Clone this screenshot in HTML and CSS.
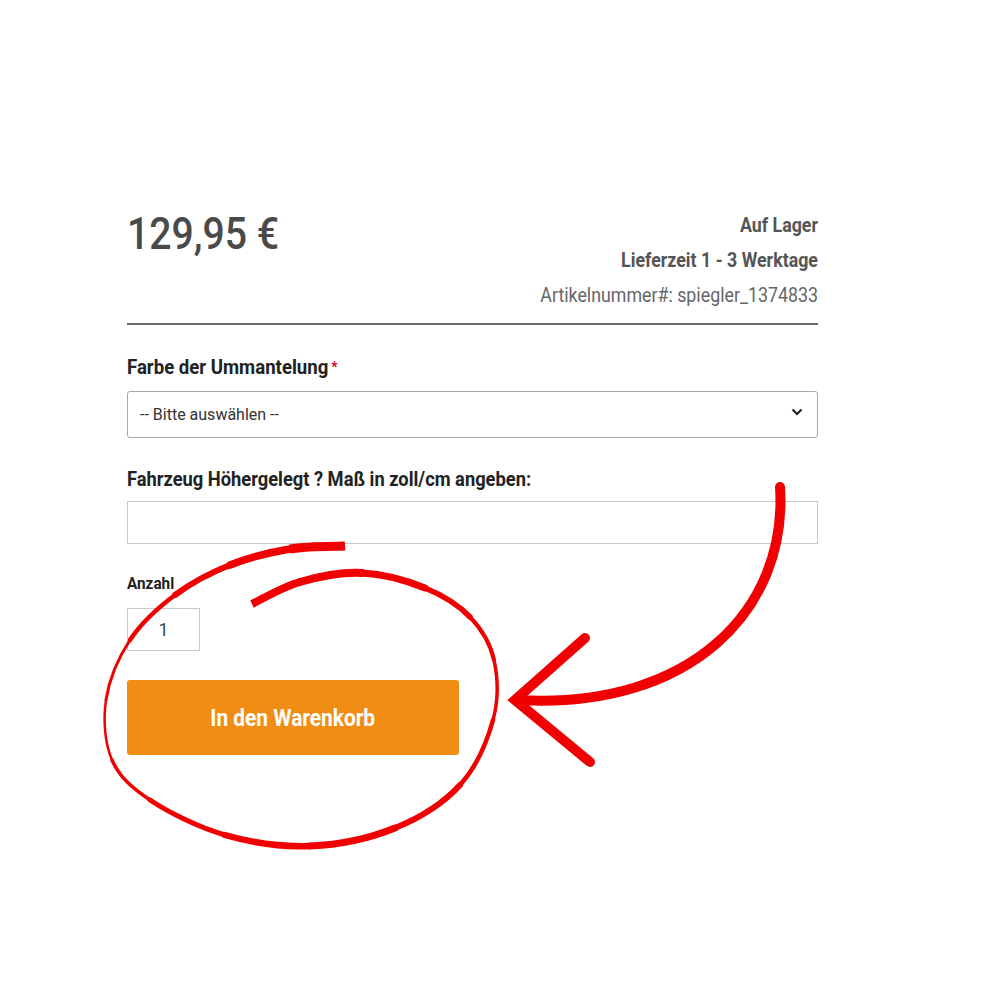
FILE: index.html
```html
<!DOCTYPE html>
<html lang="de">
<head>
<meta charset="utf-8">
<title>Produkt</title>
<link rel="stylesheet" href="styles.css">
</head>
<body>
<main class="product">
  <div class="head">
    <div class="price">129,95 €</div>
    <div class="meta">
      <div class="meta-strong">Auf Lager</div>
      <div class="meta-strong">Lieferzeit 1 - 3 Werktage</div>
      <div class="meta-light">Artikelnummer#: spiegler_1374833</div>
    </div>
  </div>
  <div class="rule"></div>

  <div class="field">
    <label class="label">Farbe der Ummantelung<span class="req">*</span></label>
    <div class="select">
      <span class="select-text">-- Bitte auswählen --</span>
      <svg class="chev" width="12" height="8" viewBox="0 0 12 8"><path d="M1.5 1.5 L6 6 L10.5 1.5" fill="none" stroke="#222" stroke-width="2.2"/></svg>
    </div>
  </div>

  <div class="field field-2">
    <label class="label label-2">Fahrzeug Höhergelegt ? Maß in zoll/cm angeben:</label>
    <div class="text-input"></div>
  </div>

  <div class="qty-field">
    <label class="qty-label">Anzahl</label>
    <div class="qty">1</div>
  </div>

  <button class="cart"><span class="cart-text">In den Warenkorb</span></button>
</main>

<svg class="marks" width="1000" height="1000" viewBox="0 0 1000 1000">
  <g fill="none" stroke="#f00000" stroke-linecap="round">
    <path d="M345,546 C335.8,546.5 309.2,545.8 290,549" stroke-width="9" stroke-linecap="butt"/>
    <path d="M290,549 C270.8,552.2 249.2,557.3 230,565" stroke-width="7.5"/>
    <path d="M230,565 C210.8,572.7 191.7,582.5 175,595" stroke-width="6"/>
    <path d="M175,595 C158.3,607.5 141.5,622.5 130,640" stroke-width="4.5"/>
    <path d="M130,640 C118.5,657.5 109,680 106,700" stroke-width="3"/>
    <path d="M106,700 C103,720 104.7,743.3 112,760" stroke-width="2.5"/>
    <path d="M112,760 C119.3,776.7 131.2,787.5 150,800" stroke-width="3.5"/>
    <path d="M150,800 C168.8,812.5 198.3,827.3 225,835" stroke-width="5"/>
    <path d="M225,835 C251.7,842.7 281.7,847.2 310,846" stroke-width="6.5"/>
    <path d="M310,846 C338.3,844.8 370,838.2 395,828" stroke-width="7"/>
    <path d="M395,828 C420,817.8 443.7,803 460,785" stroke-width="6"/>
    <path d="M460,785 C476.3,767 487.3,740.8 493,720" stroke-width="4.5"/>
    <path d="M493,720 C498.7,699.2 497.8,677.2 494,660" stroke-width="3.5"/>
    <path d="M494,660 C490.2,642.8 481.5,629 470,617" stroke-width="4"/>
    <path d="M470,617 C458.5,605 443,595.3 425,588" stroke-width="5.5"/>
    <path d="M425,588 C407,580.7 382.8,574 362,573" stroke-width="7"/>
    <path d="M362,573 C341.2,572 318.3,576.8 300,582" stroke-width="8"/>
    <path d="M300,582 C281.7,587.2 260,600.3 252,604" stroke-width="8" stroke-linecap="butt"/>
    <path d="M780,487 C788,610 690,710 518,700" stroke-width="10"/>
    <path d="M585,638 L515,700 L590,762" stroke-width="10" stroke-linejoin="miter"/>
  </g>
</svg>
</body>
</html>
```

FILE: styles.css
```css
html, body {
  margin: 0;
  padding: 0;
  background: #ffffff;
}

body {
  position: relative;
  width: 1000px;
  height: 1000px;
  font-family: Roboto, "Noto Sans", sans-serif;
  color: #222;
}

.product {
  width: 691px;
  padding-top: 208px;
  margin-left: 127px;
  display: flex;
  flex-direction: column;
}

.head {
  display: flex;
  justify-content: space-between;
  align-items: flex-start;
}

.price {
  font-size: 45px;
  line-height: 52px;
  font-weight: 500;
  color: #4a4a4a;
  transform: scaleX(0.87);
  transform-origin: left top;
}

.meta {
  text-align: right;
  font-size: 20px;
  line-height: 35px;
  color: #555;
  transform: scaleX(0.89);
  transform-origin: right top;
}

.meta-strong {
  font-weight: bold;
}

.meta-light {
  color: #666;
}

.rule {
  margin-top: 10px;
  height: 2px;
  background: #6a6a6a;
}

.field {
  margin-top: 30px;
  display: flex;
  flex-direction: column;
}

.field-2 {
  margin-top: 29px;
}

.label {
  font-size: 20px;
  line-height: 24px;
  font-weight: bold;
  color: #222;
  margin-bottom: 12px;
  transform: scaleX(0.93);
  transform-origin: left top;
}

.label-2 {
  margin-bottom: 10px;
  transform: scaleX(0.915);
}

.req {
  color: #d0021b;
  font-size: 15px;
  vertical-align: top;
  margin-left: 3px;
}

.select {
  height: 47px;
  box-sizing: border-box;
  border: 1px solid #a9a9a9;
  border-radius: 3px;
  display: flex;
  align-items: center;
  justify-content: space-between;
  padding: 0 14px 0 12px;
  font-size: 16px;
  color: #333;
}

.select-text {
  display: inline-block;
}

.chev {
  margin-top: -5px;
}

.text-input {
  height: 43px;
  box-sizing: border-box;
  border: 1px solid #c8c8c8;
}

.qty-field {
  margin-top: 28px;
  display: flex;
  flex-direction: column;
  align-items: flex-start;
}

.qty-label {
  font-size: 17px;
  line-height: 22px;
  font-weight: bold;
  color: #222;
  margin-bottom: 14px;
  transform: scaleX(0.9);
  transform-origin: left top;
}

.qty {
  width: 73px;
  height: 43px;
  box-sizing: border-box;
  border: 1px solid #c8c8c8;
  display: flex;
  align-items: center;
  justify-content: center;
  font-size: 18px;
  color: #2c4a5a;
}

.cart {
  margin-top: 29px;
  width: 332px;
  height: 75px;
  border: none;
  border-radius: 3px;
  background: #f08d12;
  color: #ffffff;
  font-family: inherit;
  font-size: 24px;
  font-weight: bold;
  padding: 0;
}

.cart-text {
  display: inline-block;
  transform: scaleX(0.87);
}

.marks {
  position: absolute;
  top: 0;
  left: 0;
  pointer-events: none;
}
```
